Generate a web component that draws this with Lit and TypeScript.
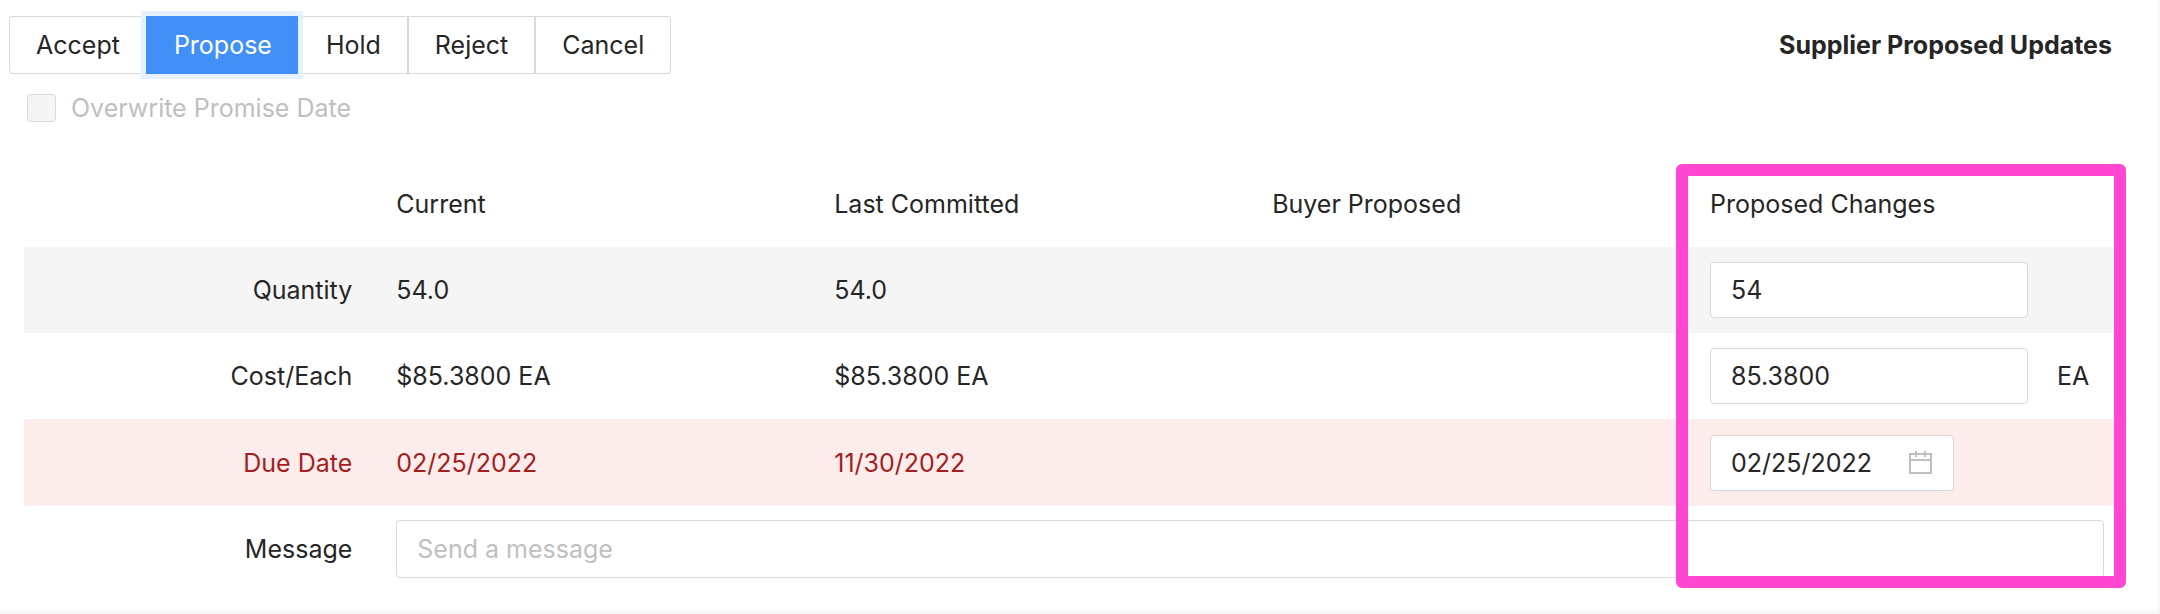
import { LitElement, html, css, svg } from "lit";
import { customElement, state } from "lit/decorators.js";

const ACTIONS = ["Accept", "Propose", "Hold", "Reject", "Cancel"];

const calendarIcon = svg`
  <path d="M1 3h21v19H1z M1 9h21 M7 0v6 M16 0v6" fill="none" stroke="currentColor" stroke-width="2" />
`;

@customElement("app-root")
export class AppRoot extends LitElement {
  @state() private action = "Propose";

  static styles = css`
    :host {
      display: block;
      min-height: 100vh;
      box-sizing: border-box;
      background: #f7f7f7;
      padding: 0 2px 4px 0;
      font-family: Inter, "Liberation Sans", sans-serif;
      font-size: 25px;
      line-height: 40px;
      color: #262626;
    }
    * {
      box-sizing: border-box;
    }
    button,
    input {
      font: inherit;
      color: inherit;
      margin: 0;
    }
    .panel {
      min-height: calc(100vh - 4px);
      background: #fff;
      padding: 16px 32px 18px 24px;
    }
    .toolbar {
      display: flex;
      align-items: center;
      justify-content: space-between;
      margin: 0 14px 0 -15px;
    }
    .actions {
      display: flex;
    }
    .action {
      height: 58px;
      padding: 0 26px;
      background: #fff;
      border: 1px solid #d9d9d9;
      border-width: 1px 0 1px 2px;
      line-height: 54px;
    }
    .action:first-child {
      border-left-width: 1px;
      border-radius: 4px 0 0 4px;
    }
    .action:last-child {
      border-right-width: 1px;
      border-radius: 0 4px 4px 0;
    }
    .action.selected {
      background: #4090f7;
      border-color: #4090f7;
      color: #fff;
      box-shadow: 0 0 0 5px #e6f1fe;
      z-index: 1;
    }
    .title {
      margin: 0;
      font-size: 25px;
      font-weight: 700;
    }
    .overwrite {
      display: flex;
      align-items: center;
      gap: 15px;
      width: fit-content;
      margin: 14px 0 33px 3px;
      color: #bfbfbf;
    }
    .tick {
      appearance: none;
      width: 29px;
      height: 28px;
      border: 1px solid #d9d9d9;
      border-radius: 4px;
      background: #f5f5f5;
    }
    .updates {
      width: 100%;
      table-layout: fixed;
      border-collapse: collapse;
    }
    .label-column {
      width: 16.6667%;
    }
    th,
    td {
      height: 86px;
      padding: 0 22px;
      font-weight: 400;
      text-align: left;
      white-space: nowrap;
    }
    tbody th {
      text-align: right;
    }
    .shaded {
      background: #f5f5f5;
    }
    .late {
      background: #fcecec;
      color: #a31f21;
    }
    .late td,
    .late th {
      height: 87px;
    }
    .entry {
      display: flex;
      align-items: center;
      gap: 29px;
    }
    .field {
      height: 56px;
      padding: 0 20px;
      background: #fff;
      border: 1px solid #d9d9d9;
      border-radius: 4px;
      color: #262626;
    }
    .amount {
      width: 318px;
    }
    .date {
      display: flex;
      align-items: center;
      width: 244px;
    }
    .date-input {
      flex: 1;
      min-width: 0;
      padding: 0;
      border: 0;
      background: none;
    }
    .calendar {
      width: 24px;
      height: 24px;
      color: #bfbfbf;
    }
    .message {
      display: block;
      width: 100%;
      height: 58px;
    }
    .message::placeholder {
      color: #bfbfbf;
      opacity: 1;
    }
    .comparison {
      position: relative;
    }
    .highlight {
      position: absolute;
      top: 3px;
      bottom: 4px;
      right: 0;
      width: 450px;
      border: 12px solid #ff47d1;
      border-radius: 6px;
      pointer-events: none;
    }
  `;

  render() {
    return html`
      <main class="panel">
        <header class="toolbar">
          <div class="actions" role="group" aria-label="Response">
            ${ACTIONS.map(
              (name) => html`<button
                type="button"
                class="action ${name === this.action ? "selected" : ""}"
                aria-pressed=${name === this.action ? "true" : "false"}
                @click=${() => (this.action = name)}
              >${name}</button>`
            )}
          </div>
          <h2 class="title">Supplier Proposed Updates</h2>
        </header>
        <label class="overwrite">
          <input class="tick" type="checkbox" disabled />
          Overwrite Promise Date
        </label>
        <div class="comparison">
          <table class="updates">
            <colgroup>
              <col class="label-column" />
              <col span="4" />
            </colgroup>
            <thead>
              <tr>
                <td></td>
                <th scope="col">Current</th>
                <th scope="col">Last Committed</th>
                <th scope="col">Buyer Proposed</th>
                <th scope="col">Proposed Changes</th>
              </tr>
            </thead>
            <tbody>
              <tr class="shaded">
                <th scope="row"><label for="quantity">Quantity</label></th>
                <td>54.0</td>
                <td>54.0</td>
                <td></td>
                <td><div class="entry"><input id="quantity" class="field amount" value="54" /></div></td>
              </tr>
              <tr>
                <th scope="row"><label for="cost">Cost/Each</label></th>
                <td>$85.3800 EA</td>
                <td>$85.3800 EA</td>
                <td></td>
                <td>
                  <div class="entry"><input id="cost" class="field amount" value="85.3800" /><span>EA</span></div>
                </td>
              </tr>
              <tr class="late">
                <th scope="row"><label for="due">Due Date</label></th>
                <td>02/25/2022</td>
                <td>11/30/2022</td>
                <td></td>
                <td>
                  <div class="field date">
                    <input id="due" class="date-input" value="02/25/2022" />
                    <svg class="calendar" viewBox="0 0 24 24" aria-hidden="true">${calendarIcon}</svg>
                  </div>
                </td>
              </tr>
              <tr>
                <th scope="row"><label for="message">Message</label></th>
                <td colspan="4"><input id="message" class="field message" placeholder="Send a message" /></td>
              </tr>
            </tbody>
          </table>
          <div class="highlight"></div>
        </div>
      </main>
    `;
  }
}
